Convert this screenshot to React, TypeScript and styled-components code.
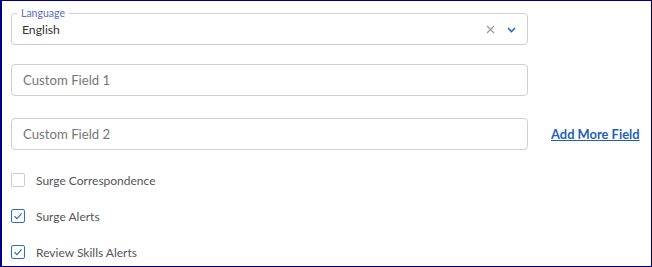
import React from "react";
import styled, { createGlobalStyle } from "styled-components";

const GlobalStyle = createGlobalStyle`
  html, body {
    margin: 0;
    padding: 0;
    background: #ffffff;
  }
  * {
    box-sizing: border-box;
  }
`;

const Frame = styled.div`
  width: 652px;
  height: 267px;
  border-style: solid;
  border-color: #000080;
  border-width: 1px 1px 1px 2px;
  padding: 12px 0 0 9px;
  font-family: "Lato", "Liberation Sans", sans-serif;
  overflow: hidden;
`;

const FieldRow = styled.div<{ $gap: number }>`
  display: flex;
  align-items: center;
  margin-bottom: ${(p) => p.$gap}px;
`;

const FieldBox = styled.fieldset`
  position: relative;
  width: 517px;
  height: 32px;
  margin: 0;
  padding: 0 10px;
  border: 1px solid #cfcfcf;
  border-radius: 4px;
  display: flex;
  align-items: center;
`;

const FloatLabel = styled.legend`
  position: absolute;
  top: -7px;
  left: 5px;
  padding: 0 4px;
  background: #ffffff;
  font-size: 10.5px;
  line-height: 12px;
  color: #5a6cc4;
`;

const Value = styled.span`
  flex: 1;
  font-size: 12.2px;
  color: #333333;
`;

const Placeholder = styled.span`
  flex: 1;
  font-size: 13.2px;
  color: #777777;
  padding-left: 1px;
`;

const Icons = styled.div`
  display: flex;
  align-items: center;
  gap: 12px;
  margin-right: 1px;
`;

const AddLink = styled.a`
  margin-left: 23px;
  font-size: 12.9px;
  font-weight: 700;
  color: #1f5fbf;
  text-decoration: underline;
  cursor: pointer;
`;

const CheckRow = styled.label`
  display: flex;
  align-items: center;
  height: 36px;
  gap: 11px;
  font-size: 12px;
  color: #555555;
`;

const Box = styled.span<{ $on: boolean }>`
  width: 14px;
  height: 14px;
  border: 1px solid ${(p) => (p.$on ? "#2a6fc4" : "#cccccc")};
  border-radius: 2px;
  display: flex;
  align-items: center;
  justify-content: center;
  background: #ffffff;
`;

const Checks = styled.div`
  margin-top: 12px;
  padding-left: 0;
`;

const Check = ({ on, label }: { on: boolean; label: string }) => (
  <CheckRow>
    <Box $on={on}>
      {on && (
        <svg width="10" height="10" viewBox="0 0 10 10">
          <path d="M1.5 5.2 L4 7.6 L8.6 2.4" fill="none" stroke="#2a6fc4" strokeWidth="1.2" />
        </svg>
      )}
    </Box>
    {label}
  </CheckRow>
);

export default function App() {
  return (
    <>
      <GlobalStyle />
      <Frame>
        <FieldRow $gap={19}>
          <FieldBox>
            <FloatLabel>Language</FloatLabel>
            <Value>English</Value>
            <Icons>
              <svg width="9" height="9" viewBox="0 0 9 9">
                <path d="M1 1 L8 8 M8 1 L1 8" stroke="#9a9a9a" strokeWidth="1.2" />
              </svg>
              <svg width="9" height="9" viewBox="0 0 9 9">
                <path d="M1 3 L4.5 6.5 L8 3" fill="none" stroke="#1c6fd1" strokeWidth="1.6" />
              </svg>
            </Icons>
          </FieldBox>
        </FieldRow>
        <FieldRow $gap={22}>
          <FieldBox>
            <Placeholder>Custom Field 1</Placeholder>
          </FieldBox>
        </FieldRow>
        <FieldRow $gap={0}>
          <FieldBox>
            <Placeholder>Custom Field 2</Placeholder>
          </FieldBox>
          <AddLink>Add More Field</AddLink>
        </FieldRow>
        <Checks>
          <Check on={false} label="Surge Correspondence" />
          <Check on={true} label="Surge Alerts" />
          <Check on={true} label="Review Skills Alerts" />
        </Checks>
      </Frame>
    </>
  );
}
